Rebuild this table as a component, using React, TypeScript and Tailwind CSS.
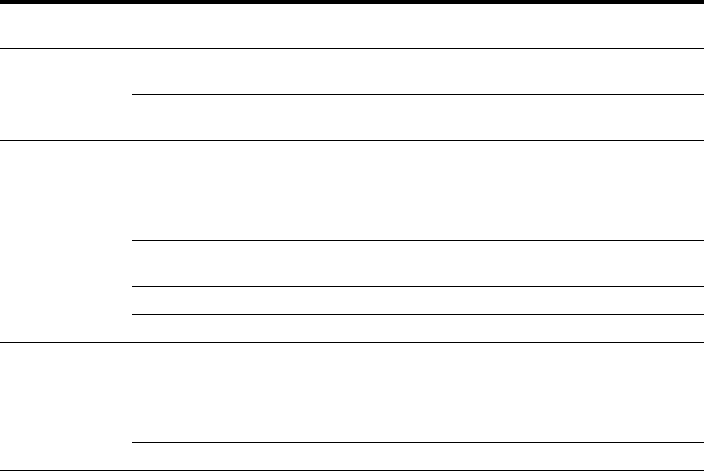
import React from 'react';

const App: React.FC = () => {
  return (
    <div className="w-full bg-white font-['Liberation_Sans',sans-serif] text-sm text-black">
      <div className="h-[4px] w-full bg-black" />
      <div className="h-[44px] w-full" />

      <div className="flex border-t border-black">
        <div className="w-[132px] shrink-0" />
        <div className="flex flex-1 flex-col">
          <div className="h-[46px] border-b border-black" />
          <div className="h-[45px]" />
        </div>
      </div>

      <div className="flex border-t border-black">
        <div className="w-[132px] shrink-0" />
        <div className="flex flex-1 flex-col">
          <div className="h-[100px] border-b border-black" />
          <div className="h-[46px] border-b border-black" />
          <div className="h-[28px] border-b border-black" />
          <div className="h-[27px]" />
        </div>
      </div>

      <div className="flex border-y border-black">
        <div className="w-[132px] shrink-0" />
        <div className="flex flex-1 flex-col">
          <div className="h-[100px] border-b border-black" />
          <div className="h-[27px]" />
        </div>
      </div>
    </div>
  );
};

export default App;
